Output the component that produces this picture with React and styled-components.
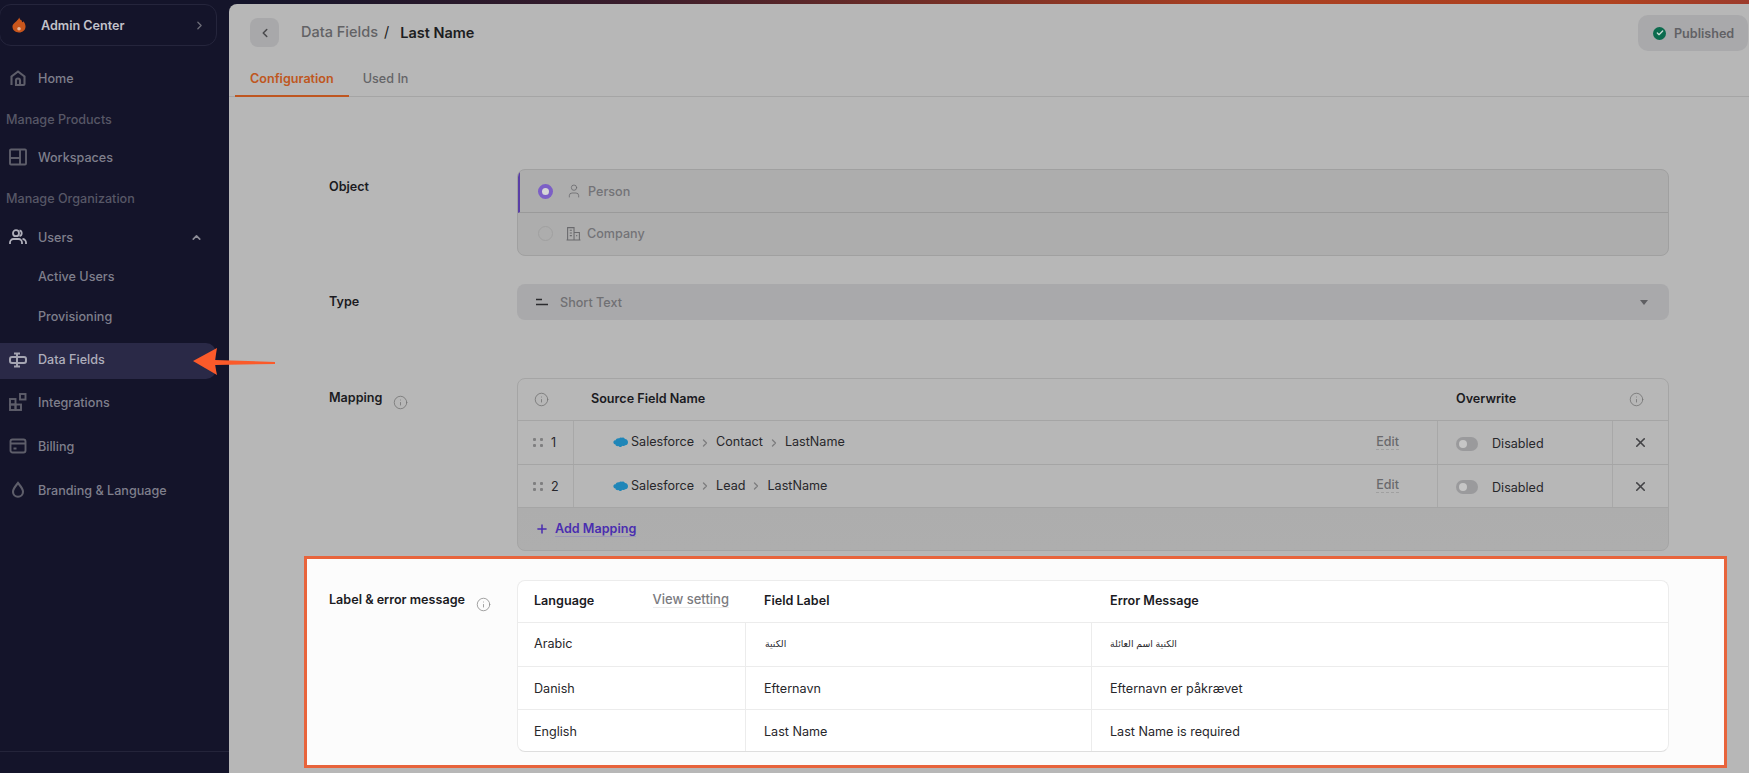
import React from "react";
import styled, { createGlobalStyle } from "styled-components";
import { ChevronLeft, ChevronRight, ChevronUp, Info, Plus, X, Check, User } from "lucide-react";

const GlobalStyle = createGlobalStyle`
  html, body { margin: 0; padding: 0; height: 100%; overflow: hidden; }
  body { font-family: Inter, "Noto Sans", "DejaVu Sans", sans-serif; }
  #root { height: 100%; }
`;

const Shell = styled.div`
  position: relative;
  display: flex;
  width: 1749px;
  height: 773px;
  overflow: hidden;
  padding-top: 4px;
  box-sizing: border-box;
  background: linear-gradient(90deg, #14142a 14%, #3a1d2c 36%, #a83f22 70%, #b0421f 92%, #9c3b2c 100%);
`;

const Sidebar = styled.aside`
  position: relative;
  width: 229px;
  flex: none;
  margin-top: -4px;
  padding-top: 4px;
  background: #14142a;
  display: flex;
  flex-direction: column;
`;

const OrgSwitch = styled.div`
  display: flex;
  align-items: center;
  height: 42px;
  width: 218px;
  margin-left: -1px;
  margin-bottom: 10px;
  padding: 0 10px 0 12px;
  box-sizing: border-box;
  border: 1px solid #25253c;
  border-radius: 12px;
  color: #c2c2ca;
  font-size: 12.6px;
  font-weight: 600;
  svg:last-child { margin-left: auto; color: #6d6d78; }
`;

const OrgName = styled.span`
  margin-left: 15px;
`;

const NavItem = styled.div`
  display: flex;
  align-items: center;
  height: ${p => p.$h || 44}px;
  margin-top: ${p => p.$mt || 0}px;
  width: ${p => (p.$active ? 216 : 229)}px;
  padding: 0 ${p => (p.$active ? 0 : 17)}px ${p => (p.$active ? 3 : 0)}px ${p => (p.$sub ? 38 : 9)}px;
  box-sizing: border-box;
  font-size: 12.6px;
  font-weight: 500;
  color: ${p => (p.$active ? "#aeaebb" : "#7f7f8c")};
  background: ${p => (p.$active ? "#2a2947" : "transparent")};
  border-radius: ${p => (p.$active ? "0 10px 10px 0" : "0")};
  svg.lead { width: 18px; height: 18px; margin-right: 11px; flex: none; color: ${p => (p.$active ? "#a5a5b2" : "#5e5e6a")}; }
  svg.tail { margin-left: auto; margin-right: 9px; color: #8d8d98; }
`;

const NavSection = styled.div`
  display: flex;
  align-items: center;
  height: ${p => p.$h || 38}px;
  padding-left: 6px;
  font-size: 12.6px;
  font-weight: 500;
  color: #575766;
`;

const SidebarFoot = styled.div`
  margin-top: auto;
  height: 21px;
  border-top: 1px solid #24243a;
`;

const Main = styled.main`
  flex: 1;
  min-width: 0;
  background: #b7b7b7;
  border-top-left-radius: 8px;
  display: flex;
  flex-direction: column;
`;

const TopBar = styled.header`
  display: flex;
  align-items: center;
  height: 58px;
  padding: 0 1px 0 21px;
  flex: none;
`;

const BackButton = styled.button`
  display: flex;
  align-items: center;
  justify-content: center;
  width: 29px;
  height: 29px;
  margin-top: -1px;
  padding: 0;
  border: 0;
  border-radius: 8px;
  background: #a8a8aa;
  color: #49494c;
`;

const Crumbs = styled.div`
  display: flex;
  align-items: baseline;
  margin-left: 22px;
  margin-top: -3px;
`;

const CrumbLink = styled.span`
  font-size: 14.5px;
  font-weight: 500;
  color: #626265;
`;

const CrumbSlash = styled.span`
  margin: 0 11px 0 6px;
  font-size: 14.5px;
  color: #222;
`;

const CrumbCurrent = styled.span`
  position: relative;
  top: 1px;
  font-size: 14.5px;
  font-weight: 600;
  color: #1d1d21;
`;

const PublishedPill = styled.div`
  display: flex;
  align-items: center;
  gap: 8px;
  width: 110px;
  height: 36px;
  margin-left: auto;
  padding-left: 15px;
  box-sizing: border-box;
  border-radius: 10px;
  background: #a9a9ab;
  color: #616165;
  font-size: 12.6px;
  font-weight: 600;
`;

const GreenDot = styled.span`
  display: flex;
  align-items: center;
  justify-content: center;
  width: 13px;
  height: 13px;
  border-radius: 50%;
  background: #0c6b4e;
  color: #c9dcd5;
`;

const Tabs = styled.nav`
  display: flex;
  height: 35px;
  flex: none;
  box-sizing: border-box;
  padding-left: 6px;
  border-bottom: 1px solid #a5a5a5;
`;

const Tab = styled.div`
  height: 35px;
  box-sizing: border-box;
  padding: 9px 15px 0;
  font-size: 12.6px;
  font-weight: ${p => (p.$active ? 600 : 500)};
  color: ${p => (p.$active ? "#bf5620" : "#646467")};
  border-bottom: 2px solid ${p => (p.$active ? "#bf5620" : "transparent")};
  & + & { margin-left: -1px; }
`;

const Form = styled.div`
  display: flex;
  flex-direction: column;
  padding: 72px 0 0 101px;
`;

const Row = styled.section`
  display: grid;
  grid-template-columns: 187px 1152px;
  margin-bottom: ${p => p.$mb || 0}px;
`;

const Label = styled.div`
  display: flex;
  align-items: flex-start;
  margin-left: -1px;
  padding-top: ${p => p.$pt || 9}px;
  font-size: 12.6px;
  font-weight: 600;
  line-height: 18px;
  color: #1b1b1f;
  svg { margin: 6px 0 0 11px; color: ${p => (p.$light ? "#8d8d8d" : "#747474")}; }
`;

const RadioGroup = styled.div`
  height: 87px;
  box-sizing: border-box;
  border: 1px solid #a0a0a0;
  border-radius: 8px;
  background: #adadad;
  overflow: hidden;
`;

const RadioRow = styled.div`
  display: flex;
  align-items: center;
  height: ${p => (p.$selected ? 43 : 41)}px;
  box-sizing: border-box;
  padding-left: ${p => (p.$selected ? 18 : 20)}px;
  border-left: ${p => (p.$selected ? "2px solid #5a3fa6" : "0")};
  border-bottom: ${p => (p.$selected ? "1px solid #9a9a9a" : "0")};
  font-size: 12.6px;
  font-weight: 500;
  color: #737377;
  svg { margin: 0 6px 0 13px; color: #6a6a6d; flex: none; }
`;

const RadioDot = styled.span`
  width: 15px;
  height: 15px;
  flex: none;
  box-sizing: border-box;
  border-radius: 50%;
  border: ${p => (p.$on ? "4px solid #7c5fc6" : "1.5px solid #a0a0a0")};
  background: ${p => (p.$on ? "#d6d6d6" : "transparent")};
`;

const SelectBox = styled.div`
  display: flex;
  align-items: center;
  height: 36px;
  padding: 0 21px 0 19px;
  border-radius: 8px;
  background: #a9a9ab;
  font-size: 12.6px;
  font-weight: 500;
  color: #707073;
  svg { margin-right: 12px; flex: none; }
`;

const Caret = styled.span`
  margin-left: auto;
  width: 0;
  height: 0;
  border: 4.5px solid transparent;
  border-top: 5px solid #5f5f62;
  border-bottom: 0;
`;

const MappingTable = styled.div`
  height: 173px;
  box-sizing: border-box;
  border: 1px solid #a5a5a5;
  border-radius: 8px;
  background: linear-gradient(#b7b7b7 129px, #adadad 129px, #aeaeae);
  overflow: hidden;
`;

const MapRow = styled.div`
  display: grid;
  grid-template-columns: 55px 864px 175px 1fr;
  height: ${p => p.$h || 44}px;
  box-sizing: border-box;
  border-bottom: 1px solid #a5a5a5;
  font-size: 12.6px;
  color: #27272b;
`;

const MapCell = styled.div`
  display: flex;
  align-items: center;
  min-width: 0;
  padding-left: ${p => p.$pl || 0}px;
  padding-bottom: ${p => (p.$head ? 2 : 0)}px;
  border-left: ${p => (p.$line ? "1px solid #a8a8a8" : "0")};
  font-weight: ${p => (p.$head ? 600 : 400)};
  color: ${p => (p.$head ? "#1b1b1f" : "inherit")};
`;

const DragCell = styled(MapCell)`
  gap: 7px;
`;

const ToggleCell = styled(MapCell)`
  padding-top: 2px;
`;

const Crumb = styled.span`
  margin-top: -2px;
  & + svg { margin: 0 5px; color: #7c7c7e; }
`;

const EditLink = styled.span`
  margin-left: auto;
  margin-right: 38px;
  margin-top: -2px;
  font-size: 12.5px;
  font-weight: 500;
  color: #69696c;
  border-bottom: 1px dashed #a0a0a0;
`;

const Toggle = styled.span`
  position: relative;
  width: 22px;
  height: 14px;
  margin-right: 14px;
  flex: none;
  border-radius: 7px;
  background: #9a9a9c;
  &::after {
    content: "";
    position: absolute;
    left: 3px;
    top: 3px;
    width: 8px;
    height: 8px;
    border-radius: 50%;
    background: #c6c6c6;
  }
`;

const AddRow = styled.div`
  display: flex;
  align-items: center;
  height: 43px;
  padding: 0 0 2px 17px;
  box-sizing: border-box;
  gap: 6px;
  color: #4a2db0;
  font-size: 12.6px;
  font-weight: 600;
`;

const AddLink = styled.span`
  border-bottom: 1px solid #9c97b6;
`;

const Highlight = styled.section`
  display: grid;
  grid-template-columns: 187px 1152px;
  width: 1423px;
  height: 212px;
  margin: 5px 0 0 -26px;
  padding: 21px 0 0 23px;
  box-sizing: border-box;
  border: 3px solid #e8643c;
  background: #fcfcfc;
`;

const LangTable = styled.div`
  height: 172px;
  box-sizing: border-box;
  border: 1px solid #ececec;
  border-bottom-color: #dedede;
  border-radius: 8px;
  background: #fff;
  overflow: hidden;
`;

const LangRow = styled.div`
  display: grid;
  grid-template-columns: 227px 346px 1fr;
  height: ${p => p.$h || 44}px;
  box-sizing: border-box;
  color: #27272b;
  & + & { border-top: 1px solid #ececec; }
`;

const LangCell = styled.div`
  display: flex;
  align-items: center;
  padding: 0 0 ${p => (p.$flat ? 0 : 2)}px ${p => p.$pl || 16}px;
  border-left: ${p => (p.$line ? "1px solid #ececec" : "0")};
  font-weight: ${p => (p.$head ? 600 : 400)};
  color: ${p => (p.$head ? "#1b1b1f" : "inherit")};
  font-size: ${p => (p.$rtl ? "9.4px" : "12.6px")};
`;

const ViewSetting = styled.span`
  margin-left: auto;
  margin-right: 16px;
  margin-top: -2px;
  font-size: 13px;
  font-weight: 500;
  color: #7b7b7f;
  border-bottom: 1px solid #ececec;
`;

const Arrow = styled.svg`
  position: absolute;
  left: 192px;
  top: 347px;
`;

const HomeIcon = () => (
  <svg className="lead" viewBox="0 0 18 18" fill="none" stroke="currentColor" strokeWidth="2.1">
    <path d="M2.5 16V7.5L9 2.5l6.5 5V15a1 1 0 0 1-1 1H7v-4.5a2 2 0 0 1 4 0V15" />
  </svg>
);
const LayoutIcon = () => (
  <svg className="lead" viewBox="0 0 18 18" fill="none" stroke="currentColor" strokeWidth="1.9">
    <rect x="1" y="1.500" width="16" height="15" rx="1" />
    <path d="M11 1.500v15M1 10h10" />
  </svg>
);
const UsersIcon = () => (
  <svg className="lead" viewBox="0 0 18 18" fill="none" stroke="#b0b0bb" strokeWidth="1.8">
    <circle cx="7" cy="5.200" r="3" />
    <path d="M1 16v-1.500a3.500 3.500 0 0 1 3.500-3.500h5a3.500 3.500 0 0 1 3.500 3.500V16M10.500 2.300a3 3 0 0 1 0 5.800M13.500 11a3.500 3.500 0 0 1 3.500 3.500V16" />
  </svg>
);
const FieldsIcon = () => (
  <svg className="lead" viewBox="0 0 18 18" fill="none" stroke="currentColor" strokeWidth="2">
    <path d="M5 2.500h6M5 15.500h6M8 2.500v13" />
    <rect x="1" y="6" width="16" height="6" rx="2" />
  </svg>
);
const IntegrationsIcon = () => (
  <svg className="lead" viewBox="0 0 18 18" fill="none" stroke="currentColor" strokeWidth="1.9">
    <rect x="1" y="6" width="5.500" height="5.500" />
    <rect x="1" y="11.500" width="5.500" height="5.500" />
    <rect x="6.500" y="11.500" width="5.500" height="5.500" />
    <rect x="11" y="1" width="5.500" height="5.500" />
  </svg>
);
const BillingIcon = () => (
  <svg className="lead" viewBox="0 0 18 18" fill="none" stroke="currentColor" strokeWidth="1.9">
    <rect x="1.500" y="2.500" width="15" height="13" rx="2" />
    <path d="M1.500 6.500h15M4.500 11.500h3" />
  </svg>
);
const DropIcon = () => (
  <svg className="lead" viewBox="0 0 18 18" fill="none" stroke="currentColor" strokeWidth="2.1">
    <path d="M9 2c2.600 3.200 5 5.600 5 8.800a5 5 0 0 1-10 0C4 7.600 6.400 5.200 9 2z" />
  </svg>
);
const Flame = () => (
  <svg width="14" height="16" viewBox="0 0 15 16">
    <path d="M7.700 0c.6 2.200 2 3.100 3 3.400-.1 1-.1 1.400.3 1.700.4-.3.800-.7 1-1.200 1.400 1.400 2.500 3.300 2.500 5.600 0 3.800-3 6.500-7 6.500s-7-2.600-7-6.300C.5 5.800 6.100 4.300 7.700 0z" fill="#c9561c" />
    <circle cx="7.500" cy="12" r="1.900" fill="#e8b89c" />
  </svg>
);
const BuildingIcon = () => (
  <svg width="15" height="15" viewBox="0 0 14 14" fill="none" stroke="currentColor" strokeWidth="1">
    <path d="M1.500 13V1.500h6V13M7.500 6h5v7M.5 13h13M3.500 4h2M3.500 6.500h2M3.500 9h2M9.500 9h1" />
  </svg>
);
const ShortTextIcon = () => (
  <svg width="12" height="8" viewBox="0 0 12 8" stroke="#2c2c2f" strokeWidth="1.400">
    <path d="M0 1.500h6M0 6.500h12" />
  </svg>
);
const DragDots = () => (
  <svg width="11" height="9" viewBox="0 0 11 9" fill="#7f7f80">
    <rect x="0" y="0" width="3" height="3" rx="1" />
    <rect x="7" y="0" width="3" height="3" rx="1" />
    <rect x="0" y="6" width="3" height="3" rx="1" />
    <rect x="7" y="6" width="3" height="3" rx="1" />
  </svg>
);
const Cloud = styled(({ className }) => (
  <svg className={className} width="15" height="11" viewBox="0 0 15 11">
    <path d="M6 1.500a2.500 2.500 0 0 1 3-.8A2.800 2.800 0 0 1 12 2c1.800 0 3 1.400 3 3.200S13.500 8.500 12 8.200c-.8 1-2 1.100-2.800.6-.6 1.500-3 1.800-3.800.3C3.800 9.500 2.600 8.700 2.500 7.600 1 7.300 0 6 .5 4.600c.4-1 1.300-1.400 2-1.200C3 2 4.800 1 6 1.500z" fill="#1f86b8" />
  </svg>
))`
  margin-right: 3px;
  flex: none;
`;

const path1 = ["Salesforce", "Contact", "LastName"];
const path2 = ["Salesforce", "Lead", "LastName"];

const MappingRow = ({ index, parts }) => (
  <MapRow $h={index === 1 ? 44 : 43}>
    <DragCell $pl={15}>
      <DragDots />
      {index}
    </DragCell>
    <MapCell $line $pl={39}>
      <Cloud />
      {parts.map((part, i) => (
        <React.Fragment key={part}>
          <Crumb>{part}</Crumb>
          {i < parts.length - 1 && <ChevronRight size={12} strokeWidth={2.6} />}
        </React.Fragment>
      ))}
      <EditLink>Edit</EditLink>
    </MapCell>
    <ToggleCell $line $pl={18}>
      <Toggle />
      Disabled
    </ToggleCell>
    <MapCell $line $pl={20}>
      <X size={15} color="#434346" strokeWidth={2.6} />
    </MapCell>
  </MapRow>
);

export default function App() {
  return (
    <>
      <GlobalStyle />
      <Shell>
        <Sidebar>
          <OrgSwitch>
            <Flame />
            <OrgName>Admin Center</OrgName>
            <ChevronRight size={13} strokeWidth={2.4} />
          </OrgSwitch>
          <NavItem $h={44}><HomeIcon />Home</NavItem>
          <NavSection $h={38}>Manage Products</NavSection>
          <NavItem $h={38}><LayoutIcon />Workspaces</NavItem>
          <NavSection $h={44}>Manage Organization</NavSection>
          <NavItem $h={34}>
            <UsersIcon />Users
            <ChevronUp className="tail" size={13} strokeWidth={3} />
          </NavItem>
          <NavItem $h={44} $sub>Active Users</NavItem>
          <NavItem $h={36} $sub>Provisioning</NavItem>
          <NavItem $h={36} $mt={9} $active><FieldsIcon />Data Fields</NavItem>
          <NavItem $h={46}><IntegrationsIcon />Integrations</NavItem>
          <NavItem $h={42}><BillingIcon />Billing</NavItem>
          <NavItem $h={42} $mt={2}><DropIcon />Branding &amp; Language</NavItem>
          <SidebarFoot />
        </Sidebar>
        <Main>
          <TopBar>
            <BackButton><ChevronLeft size={14} strokeWidth={2.6} /></BackButton>
            <Crumbs>
              <CrumbLink>Data Fields</CrumbLink>
              <CrumbSlash>/</CrumbSlash>
              <CrumbCurrent>Last Name</CrumbCurrent>
            </Crumbs>
            <PublishedPill>
              <GreenDot><Check size={8} strokeWidth={4} /></GreenDot>
              Published
            </PublishedPill>
          </TopBar>
          <Tabs>
            <Tab $active>Configuration</Tab>
            <Tab>Used In</Tab>
          </Tabs>
          <Form>
            <Row $mb={28}>
              <Label>Object</Label>
              <RadioGroup>
                <RadioRow $selected>
                  <RadioDot $on />
                  <User size={16} strokeWidth={1.2} />
                  Person
                </RadioRow>
                <RadioRow>
                  <RadioDot />
                  <BuildingIcon />
                  Company
                </RadioRow>
              </RadioGroup>
            </Row>
            <Row $mb={58}>
              <Label>Type</Label>
              <SelectBox>
                <ShortTextIcon />
                Short Text
                <Caret />
              </SelectBox>
            </Row>
            <Row>
              <Label $pt={11}>
                Mapping
                <Info size={15} strokeWidth={1.3} />
              </Label>
              <MappingTable>
                <MapRow $h={42}>
                  <MapCell $pl={16}><Info size={15} strokeWidth={1.3} color="#747474" /></MapCell>
                  <MapCell $head $pl={18}>Source Field Name</MapCell>
                  <MapCell $head $pl={19}>Overwrite</MapCell>
                  <MapCell $pl={17}><Info size={15} strokeWidth={1.3} color="#747474" /></MapCell>
                </MapRow>
                <MappingRow index={1} parts={path1} />
                <MappingRow index={2} parts={path2} />
                <AddRow>
                  <Plus size={14} strokeWidth={2.6} />
                  <AddLink>Add Mapping</AddLink>
                </AddRow>
              </MappingTable>
            </Row>
            <Highlight>
              <Label $pt={11} $light>
                Label &amp; error message
                <Info size={15} strokeWidth={1.3} />
              </Label>
              <LangTable>
                <LangRow $h={41}>
                  <LangCell $head>
                    Language
                    <ViewSetting>View setting</ViewSetting>
                  </LangCell>
                  <LangCell $head $pl={19}>Field Label</LangCell>
                  <LangCell $head $pl={19}>Error Message</LangCell>
                </LangRow>
                <LangRow>
                  <LangCell>Arabic</LangCell>
                  <LangCell $line $rtl $pl={19}>الكنية</LangCell>
                  <LangCell $line $rtl $pl={18}>الكنية اسم العائلة</LangCell>
                </LangRow>
                <LangRow $h={43}>
                  <LangCell $flat>Danish</LangCell>
                  <LangCell $flat $line $pl={18}>Efternavn</LangCell>
                  <LangCell $flat $line $pl={18}>Efternavn er påkrævet</LangCell>
                </LangRow>
                <LangRow>
                  <LangCell $flat>English</LangCell>
                  <LangCell $flat $line $pl={18}>Last Name</LangCell>
                  <LangCell $flat $line $pl={18}>Last Name is required</LangCell>
                </LangRow>
              </LangTable>
            </Highlight>
          </Form>
        </Main>
        <Arrow width="84" height="30" viewBox="0 0 84 30">
          <path d="M1 14 L25 1 L23 13 L83 15 L83 17 L23 18 L25 28 Z" fill="#fb5a2a" />
        </Arrow>
      </Shell>
    </>
  );
}
